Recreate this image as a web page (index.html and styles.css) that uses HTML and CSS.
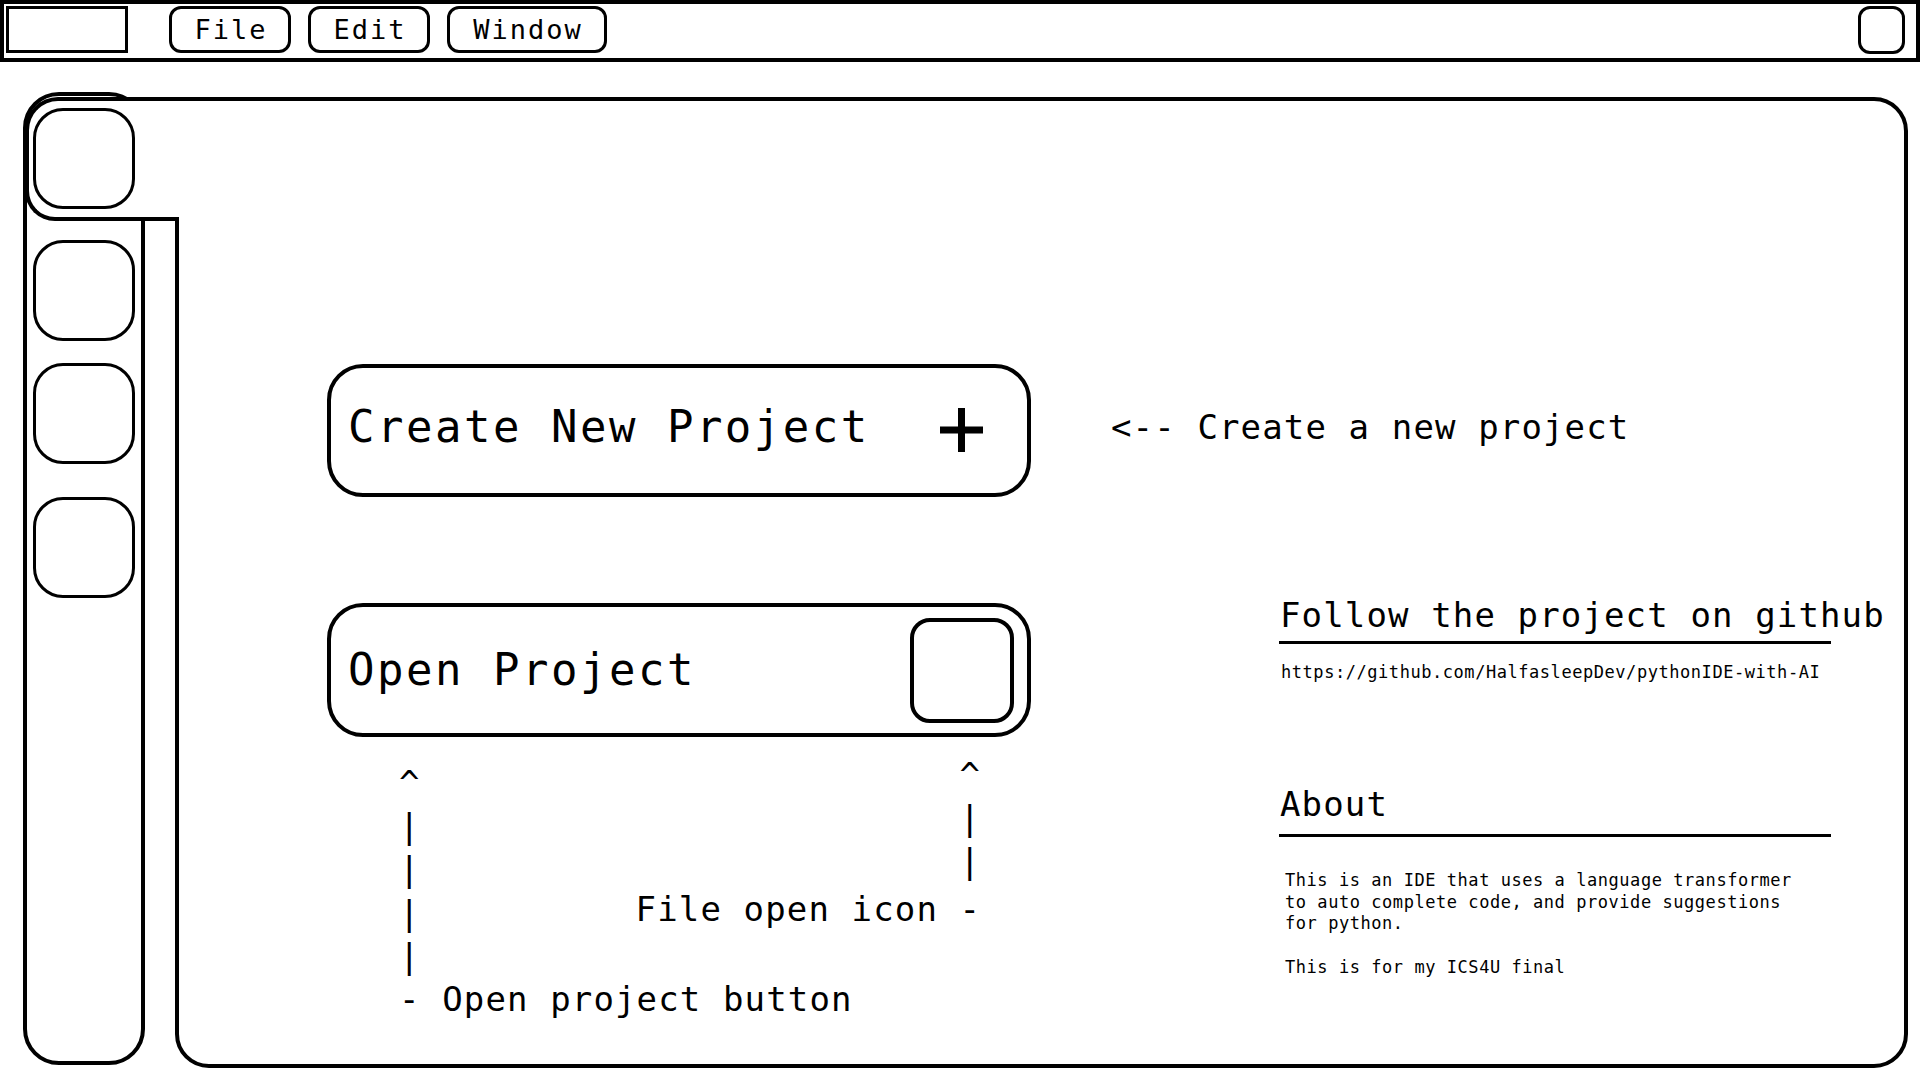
FILE: index.html
```html
<!DOCTYPE html>
<html lang="en">
<head>
<meta charset="utf-8">
<title>Python IDE - Start</title>
<link rel="stylesheet" href="styles.css">
</head>
<body>
<header class="topbar">
  <div class="logo"></div>
  <nav class="menu">
    <button class="menu-btn">File</button>
    <button class="menu-btn">Edit</button>
    <button class="menu-btn menu-btn-wide">Window</button>
  </nav>
  <button class="win-btn" aria-label="window"></button>
</header>
<div class="workspace">
  <aside class="sidebar">
    <div class="side-btn active"></div>
    <div class="side-btn s2"></div>
    <div class="side-btn s3"></div>
    <div class="side-btn s4"></div>
  </aside>
  <main class="panel">
    <div class="row-create">
      <button class="big-btn create-btn">
        <span>Create New Project</span>
        <svg class="plus" width="43" height="44" viewBox="0 0 43 44" aria-hidden="true"><path d="M21.5 0v44M0 22h43" stroke="#000" stroke-width="7" fill="none"/></svg>
      </button>
      <p class="note">&lt;-- Create a new project</p>
    </div>
    <div class="row-open">
      <div class="open-col">
        <button class="big-btn open-btn">
          <span>Open Project</span>
          <span class="file-icon"></span>
        </button>
        <div class="annotations">
<pre class="annot annot-left-arrow">^
|
|
|
|</pre>
          <div class="annot annot-right">
<pre class="annot-arrow">               ^
               |
               |</pre>
            <p class="annot-label">File open icon -</p>
          </div>
          <p class="annot annot-left-label">- Open project button</p>
        </div>
      </div>
      <section class="info">
        <h2 class="info-title follow">Follow the project on github</h2>
        <div class="rule"></div>
        <p class="url">https://github.com/HalfasleepDev/pythonIDE-with-AI</p>
        <h2 class="info-title about">About</h2>
        <div class="rule rule-about"></div>
        <p class="about-text">This is an IDE that uses a language transformer<br>to auto complete code, and provide suggestions<br>for python.<br><br>This is for my ICS4U final</p>
      </section>
    </div>
  </main>
</div>
</body>
</html>
```
FILE: styles.css
```css
*, *::before, *::after { box-sizing: border-box; }
html, body { margin: 0; padding: 0; background: #fff; }
body {
  width: 1920px;
  height: 1080px;
  overflow: hidden;
  font-family: "DejaVu Sans Mono", "Liberation Mono", monospace;
  color: #000;
}

/* ---------- top bar ---------- */
.topbar {
  height: 62px;
  border: 4px solid #000;
  display: flex;
  align-items: flex-start;
  padding: 2px 11px 0 2px;
}
.logo {
  width: 122px;
  height: 47px;
  border: 3px solid #000;
  flex-shrink: 0;
}
.menu {
  display: flex;
  gap: 17px;
  margin-left: 41px;
}
.menu-btn {
  width: 122px;
  height: 47px;
  border: 3px solid #000;
  border-radius: 12px;
  background: #fff;
  color: #000;
  padding: 0 0 0 2px;
  font-family: "DejaVu Sans Mono", monospace;
  font-size: 27px;
  letter-spacing: 2px;
  display: flex;
  align-items: center;
  justify-content: center;
}
.menu-btn-wide { width: 160px; }
.win-btn {
  margin-left: auto;
  width: 47px;
  height: 48px;
  border: 3px solid #000;
  border-radius: 12px;
  background: #fff;
  padding: 0;
}

/* ---------- workspace ---------- */
.workspace {
  display: flex;
  align-items: flex-start;
  padding-left: 23px;
  margin-top: 30px;
}
.sidebar {
  position: relative;
  z-index: 0;
  flex-shrink: 0;
  width: 122px;
  height: 973px;
  border: 4px solid #000;
  border-radius: 36px;
  padding: 12px 0 0 6px;
}
.side-btn {
  width: 102px;
  height: 101px;
  border: 3px solid #000;
  border-radius: 30px;
  background: #fff;
}
.side-btn.s2 { margin-top: 31px; }
.side-btn.s3 { margin-top: 22px; }
.side-btn.s4 { margin-top: 33px; }

/* active tab joining the sidebar item to the panel */
.side-btn.active::before {
  content: "";
  position: absolute;
  z-index: -1;
  left: -2px;
  top: 1px;
  width: 154px;
  height: 124px;
  border: 4px solid #000;
  border-right: none;
  border-radius: 33px 0 0 30px;
  background: #fff;
}

.panel {
  flex-shrink: 0;
  width: 1733px;
  height: 971px;
  margin-left: 30px;
  margin-top: 5px;
  border: 4px solid #000;
  border-radius: 0 34px 34px 34px;
  padding: 263px 0 0 148px;
}

/* ---------- big buttons ---------- */
.row-create {
  display: flex;
  align-items: center;
}
.big-btn {
  flex-shrink: 0;
  width: 704px;
  height: 133px;
  border: 4px solid #000;
  border-radius: 36px;
  background: #fff;
  color: #000;
  display: flex;
  align-items: center;
  justify-content: space-between;
  padding: 0 44px 0 17px;
  font-family: "DejaVu Sans Mono", monospace;
  font-size: 44px;
  letter-spacing: 2.5px;
  line-height: 52px;
}
.create-btn { padding-bottom: 7px; }
.plus { display: block; margin-top: 6px; }
.open-btn {
  margin-top: 9px;
  height: 134px;
  padding-right: 13px;
}
.file-icon {
  width: 104px;
  height: 105px;
  border: 4px solid #000;
  border-radius: 20px;
}

.note {
  margin: 0 0 5px 80px;
  font-size: 34px;
  letter-spacing: 1.13px;
  line-height: 43.2px;
  white-space: nowrap;
}

/* ---------- open row ---------- */
.row-open {
  display: flex;
  align-items: flex-start;
  margin-top: 97px;
}
.open-col {
  width: 704px;
  flex-shrink: 0;
}
.annotations {
  display: grid;
  grid-template-columns: max-content 1fr;
  align-items: start;
  padding-left: 72px;
}
.annot {
  margin: 0;
  font-family: "DejaVu Sans Mono", monospace;
  font-size: 34px;
  letter-spacing: 1.13px;
  line-height: 43.2px;
}
.annot-left-arrow { margin-top: 25px; }
.annot-right {
  margin: 17px 0 0 215px;
  justify-self: start;
}
.annot-left-label {
  grid-column: 1 / -1;
  justify-self: start;
  white-space: pre;
}
.annot-arrow {
  margin: 0;
  font: inherit;
  letter-spacing: inherit;
}
.annot-label {
  margin: 4px 0 0;
  white-space: pre;
}

/* ---------- info column ---------- */
.info {
  margin-left: 249px;
  width: 620px;
}
.info-title {
  margin: 0;
  font-weight: normal;
  font-size: 34px;
  letter-spacing: 1.13px;
  line-height: 43.2px;
  white-space: nowrap;
}
.about { margin-top: 99.7px; }
.rule {
  width: 552px;
  height: 3px;
  background: #000;
  margin: 4px 0 0 -1px;
}
.rule-about { margin-top: 7px; }
.url {
  margin: 18px 0 0 1px;
  font-size: 17px;
  letter-spacing: 0.55px;
  line-height: 21.6px;
}
.about-text {
  margin: 33.5px 0 0;
  padding-left: 5px;
  font-size: 17px;
  letter-spacing: 0.55px;
  line-height: 21.6px;
}
```
